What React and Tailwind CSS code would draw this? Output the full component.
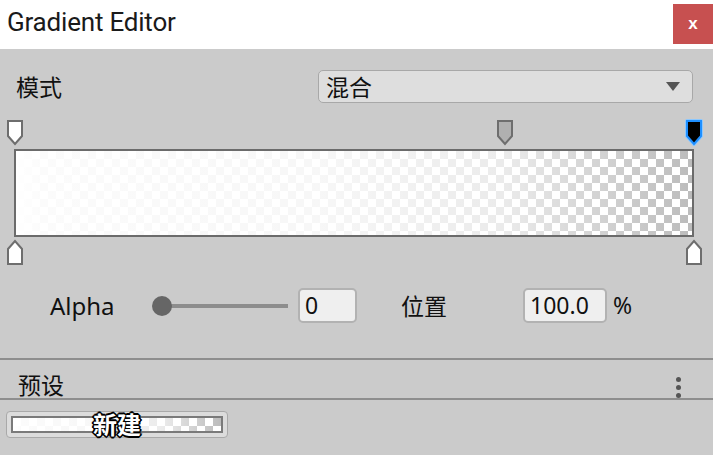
import React from "react";

const cjk = "font-['Noto_Sans_CJK_SC',sans-serif]";

// alpha / colour key markers
const Marker = ({ dir = "down", fill = "#ffffff", stroke = "#6e6e6e", selected = false }) => {
  const d =
    dir === "down"
      ? "M2 2 H16 V17 L9 25 L2 17 Z"
      : "M2 26 H16 V11 L9 3 L2 11 Z";
  return (
    <svg width="18" height="28" viewBox="0 0 18 28" className="block">
      {selected && (
        <path d={d} fill="none" stroke="#8cc8ff" strokeWidth="4" strokeLinejoin="round" />
      )}
      <path d={d} fill={fill} stroke={selected ? "#1e8fff" : stroke} strokeWidth="2" />
    </svg>
  );
};

const GradientFill = ({ cell = "bg-[length:16px_16px]" }) => (
  <div
    className={`h-full w-full bg-[conic-gradient(#bcbcbc_25%,#ffffff_0_50%,#bcbcbc_0_75%,#ffffff_0)] ${cell}`}
  >
    <div className="h-full w-full bg-[linear-gradient(to_right,rgba(255,255,255,1)_0%,rgba(255,255,255,0.94)_4%,rgba(255,255,255,0.88)_45%,rgba(255,255,255,0.7)_72%,rgba(255,255,255,0)_100%)]" />
  </div>
);

export default function App() {
  return (
    <div className="w-[713px] h-[455px] overflow-hidden flex flex-col bg-[#cbcbcb] text-[#111] select-none">
      {/* title bar */}
      <div className="h-[49px] shrink-0 bg-white flex justify-between">
        <span className="pl-[7px] pt-[3px] text-[26px] text-[#1a1a1a] font-['Roboto',sans-serif] tracking-[-0.2px]">
          Gradient Editor
        </span>
        <div className="mt-[4px] w-[40px] h-[40px] bg-[#c75050] flex items-center justify-center text-white text-[17px] font-bold font-['Liberation_Sans',sans-serif]">
          x
        </div>
      </div>

      {/* mode */}
      <div className="mt-[21px] h-[33px] flex items-center pl-[16px] pr-[20px]">
        <span className={`flex-1 text-[23px] ${cjk}`}>模式</span>
        <div className="w-[375px] h-[33px] rounded-[5px] border border-[#a8a8a8] bg-[#dedede] flex items-center justify-between pl-[7px] pr-[12px]">
          <span className={`text-[23px] leading-none ${cjk}`}>混合</span>
          <svg width="14" height="9" viewBox="0 0 14 9">
            <path d="M0 0 H14 L7 9 Z" fill="#555" />
          </svg>
        </div>
      </div>

      {/* gradient bar + keys */}
      <div className="mt-[16px] ml-[15px] mr-[19px] h-[28px] relative">
        <div className="absolute top-0 left-0 -translate-x-1/2">
          <Marker />
        </div>
        <div className="absolute top-0 left-[72.2%] -translate-x-1/2">
          <Marker fill="#b0b0b0" />
        </div>
        <div className="absolute top-0 left-full -translate-x-1/2">
          <Marker fill="#000" selected />
        </div>
      </div>
      <div className="mt-[2px] ml-[14px] mr-[19px] h-[88px] border-2 border-[#6b6b6b]">
        <GradientFill />
      </div>
      <div className="mt-[1px] ml-[15px] mr-[19px] h-[28px] relative">
        <div className="absolute top-0 left-0 -translate-x-1/2">
          <Marker dir="up" />
        </div>
        <div className="absolute top-0 left-full -translate-x-1/2">
          <Marker dir="up" />
        </div>
      </div>

      {/* alpha / location */}
      <div className="mt-[22px] h-[35px] flex items-center pl-[50px] font-['Noto_Sans',sans-serif]">
        <span className="w-[102px] text-[24px] leading-none">Alpha</span>
        <div className="w-[136px] h-[20px] relative flex items-center">
          <div className="ml-[10px] flex-1 h-[4px] bg-[#8d8d8d]" />
          <div className="absolute left-0 top-0 w-[20px] h-[20px] rounded-full bg-[#666]" />
        </div>
        <div className="ml-[10px] w-[59px] h-[35px] rounded-[5px] border-2 border-[#b2b2b2] bg-[#efefef] flex items-center pl-[5px] text-[23px]">
          0
        </div>
        <span className={`ml-[44px] w-[122px] text-[23px] ${cjk}`}>位置</span>
        <div className="w-[84px] h-[35px] rounded-[5px] border-2 border-[#b2b2b2] bg-[#efefef] flex items-center pl-[5px] text-[23px]">
          100.0
        </div>
        <span className="ml-[6px] text-[23px]">%</span>
      </div>

      {/* presets */}
      <div className="mt-[35px] h-[2px] bg-[#8e8e8e]" />
      <div className="h-[38px] flex items-center justify-between pl-[18px] pr-[32px]">
        <span className={`text-[23px] pt-[10px] ${cjk}`}>预设</span>
        <div className="flex flex-col gap-[3px] pt-[16px]">
          <div className="w-[5px] h-[5px] rounded-full bg-[#555]" />
          <div className="w-[5px] h-[5px] rounded-full bg-[#555]" />
          <div className="w-[5px] h-[5px] rounded-full bg-[#555]" />
        </div>
      </div>
      <div className="h-[2px] bg-[#8e8e8e]" />

      <div className="mt-[11px] ml-[6px] w-[222px] h-[27px] rounded-[4px] border border-[#a9a9a9] bg-[#dcdcdc] p-[4px] relative">
        <div className="h-full border-2 border-[#7a7a7a]">
          <GradientFill cell="bg-[length:16px_16px]" />
        </div>
        <div
          className={`absolute inset-0 -top-[2px] flex items-center justify-center text-white font-bold text-[24px] leading-none ${cjk} [text-shadow:-2px_0_0_#000,2px_0_0_#000,0_-2px_0_#000,0_2px_0_#000,-1px_-1px_0_#000,1px_-1px_0_#000,-1px_1px_0_#000,1px_1px_0_#000]`}
        >
          新建
        </div>
      </div>
    </div>
  );
}
